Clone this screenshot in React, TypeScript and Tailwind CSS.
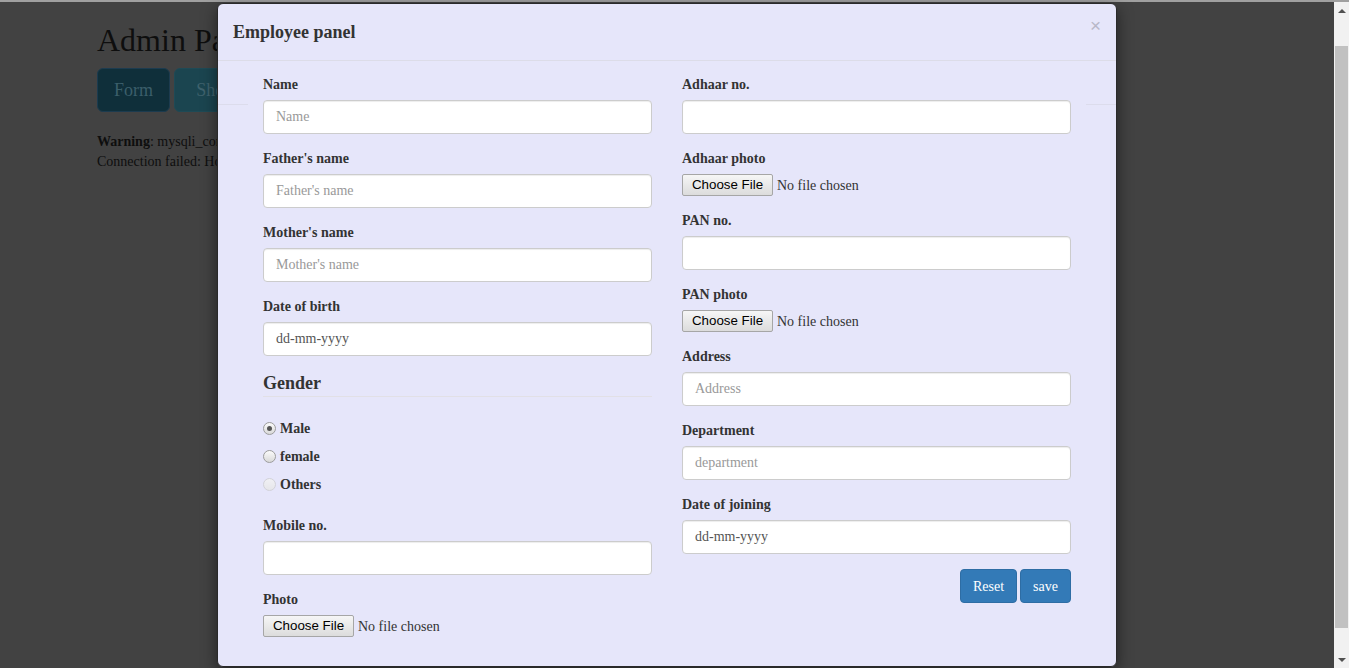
import type { ReactNode } from "react";

function Label({ children }: { children: ReactNode }) {
  return <label className="mb-[5px] block text-[14px] font-bold leading-[20px] text-[#333]">{children}</label>;
}

function TextField({ label, placeholder, value }: { label: string; placeholder?: string; value?: string }) {
  return (
    <div className="mb-[15px]">
      <Label>{label}</Label>
      <input
        className="block h-[34px] w-full rounded-[4px] border border-[#ccc] bg-white px-[12px] text-[14px] text-[#555] shadow-[inset_0_1px_1px_rgba(0,0,0,0.075)] outline-none placeholder:text-[#999]"
        placeholder={placeholder}
        defaultValue={value}
        readOnly={value !== undefined}
      />
    </div>
  );
}

function FileField({ label, last }: { label: string; last?: boolean }) {
  return (
    <div>
      <Label>{label}</Label>
      <div className={`mt-[2px] flex h-[22px] items-center ${last ? "" : "mb-[15px]"}`}>
        <span className="flex h-[22px] w-[91px] items-center justify-center rounded-[2px] border border-[#a6a6a6] bg-gradient-to-b from-[#f6f6f6] to-[#dcdcdc] font-['Liberation_Sans',Arial,sans-serif] text-[13.33px] text-black">
          Choose File
        </span>
        <span className="ml-[4px] text-[14px] text-[#333]">No file chosen</span>
      </div>
    </div>
  );
}

function Radio({ label, state }: { label: string; state: "on" | "off" | "disabled" }) {
  const ring =
    state === "disabled"
      ? "border-[#d2d2d8] from-[#f0f0f4] to-[#e6e6ea]"
      : "border-[#9c9c9c] from-[#fbfbfb] to-[#d9d9d9]";
  return (
    <div className="flex h-[20px] items-center gap-[4px]">
      <span className={`flex size-[13px] items-center justify-center rounded-full border bg-gradient-to-b ${ring}`}>
        {state === "on" && <span className="size-[5px] rounded-full bg-[#555]" />}
      </span>
      <span className="text-[14px] font-bold text-[#333]">{label}</span>
    </div>
  );
}

export default function App() {
  return (
    <div className="flex h-[668px] w-full flex-col overflow-hidden bg-[#424242] font-['Liberation_Serif','Times_New_Roman',serif]">
      <div className="h-[2px] shrink-0 bg-[#a0a0a0]" />
      <div className="flex min-h-0 flex-1">
        {/* page under the backdrop */}
        <div className="relative flex-1">
          <div className="pl-[97px]">
            <h1 className="mt-[21px] text-[32px] leading-[35px] text-[#0e0e0e]">Admin Panel</h1>
            <div className="mt-[10px] flex gap-[4px]">
              <span className="flex h-[44px] w-[73px] items-center justify-center rounded-[6px] border border-[#1c3b4f] bg-[#0f2f3a] text-[18px] text-[#3b5e6a]">
                Form
              </span>
              <span className="flex h-[44px] w-[120px] items-center justify-center rounded-[6px] border border-[#1e4a56] bg-[#1b4550] text-[18px] text-[#3f626d]">
                Show data
              </span>
            </div>
            <p className="mt-[20px] text-[14px] leading-[20px] text-[#0e0e0e]">
              <b>Warning</b>: mysqli_connect(): (HY000/2002): No connection could be made
            </p>
            <p className="text-[14px] leading-[20px] text-[#0e0e0e]">Connection failed: Host is not reachable</p>
          </div>

          {/* modal */}
          <div className="absolute left-[217px] top-[1px] w-[900px] rounded-[6px] border border-[#2a2a2a] bg-[#e6e6fa] shadow-[0_5px_15px_rgba(0,0,0,0.5)]">
            <div className="flex items-start justify-between border-b border-[#dcdce8] p-[15px]">
              <h4 className="text-[18px] font-bold leading-[26px] text-[#333]">Employee panel</h4>
              <span className="-mt-[4px] font-['Liberation_Sans',Arial,sans-serif] text-[19px] leading-[21px] text-[#b8b8c8]">×</span>
            </div>

            <div className="relative px-[30px] pb-[29px] pt-[14px]">
              <div className="absolute left-0 right-0 top-[43px] h-px bg-[#dcdcec]" />
              <div className="relative grid grid-cols-2 bg-[#e6e6fa]">
                <div className="px-[15px]">
                  <TextField label="Name" placeholder="Name" />
                  <TextField label="Father's name" placeholder="Father's name" />
                  <TextField label="Mother's name" placeholder="Mother's name" />
                  <TextField label="Date of birth" value="dd-mm-yyyy" />

                  <h4 className="border-b border-[#e2e0e6] text-[18px] font-bold leading-[25px] text-[#333]">Gender</h4>
                  <div className="mt-[21px] flex flex-col gap-[8px]">
                    <Radio label="Male" state="on" />
                    <Radio label="female" state="off" />
                    <Radio label="Others" state="disabled" />
                  </div>

                  <div className="mt-[22px]">
                    <TextField label="Mobile no." />
                  </div>
                  <FileField label="Photo" last />
                </div>

                <div className="px-[15px]">
                  <TextField label="Adhaar no." />
                  <FileField label="Adhaar photo" />
                  <TextField label="PAN no." />
                  <FileField label="PAN photo" />
                  <TextField label="Address" placeholder="Address" />
                  <TextField label="Department" placeholder="department" />
                  <TextField label="Date of joining" value="dd-mm-yyyy" />
                  <div className="flex justify-end gap-[3px]">
                    <button className="h-[34px] w-[57px] rounded-[4px] border border-[#2e6da4] bg-[#337ab7] text-[14px] text-white">
                      Reset
                    </button>
                    <button className="h-[34px] w-[51px] rounded-[4px] border border-[#2e6da4] bg-[#337ab7] text-[14px] text-white">
                      save
                    </button>
                  </div>
                </div>
              </div>
            </div>
          </div>
        </div>

        {/* scrollbar */}
        <div className="flex w-[15px] shrink-0 flex-col bg-[#f1f1f1]">
          <div className="flex h-[17px] items-center justify-center">
            <span className="h-0 w-0 border-x-[4px] border-b-[4px] border-x-transparent border-b-[#505050]" />
          </div>
          <div className="mx-[1px] mt-[27px] h-[582px] bg-[#c1c1c1]" />
          <div className="mt-auto flex h-[17px] items-center justify-center">
            <span className="h-0 w-0 border-x-[4px] border-t-[4px] border-x-transparent border-t-[#505050]" />
          </div>
        </div>
      </div>
    </div>
  );
}
